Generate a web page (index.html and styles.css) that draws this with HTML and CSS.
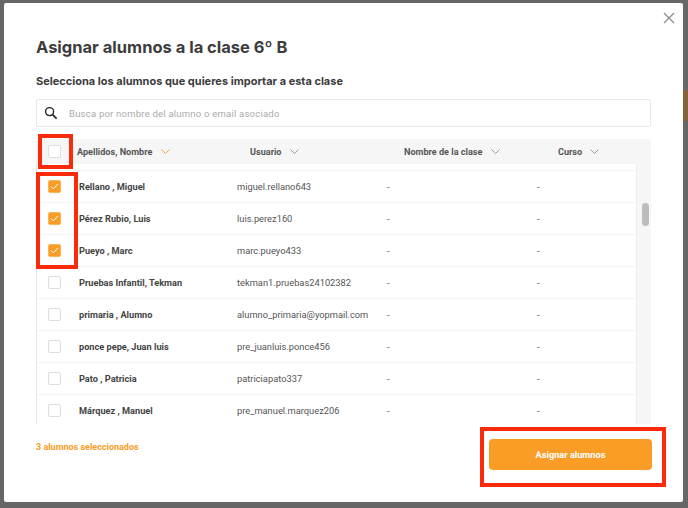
FILE: index.html
```html
<!DOCTYPE html>
<html lang="es">
<head>
<meta charset="utf-8">
<title>Asignar alumnos</title>
<link rel="stylesheet" href="styles.css">
</head>
<body>
<div class="backdrop-strip"></div>
<main class="modal">
  <button class="close" aria-label="Cerrar"><svg width="12" height="12" viewBox="0 0 12 12"><path d="M1 1l10 10M11 1L1 11" stroke="#8a8a8a" stroke-width="1.2" fill="none"/></svg></button>
  <h1>Asignar alumnos a la clase 6º B</h1>
  <h2>Selecciona los alumnos que quieres importar a esta clase</h2>
  <div class="search">
    <svg width="14" height="14" viewBox="0 0 15 15"><circle cx="6" cy="6" r="4.3" stroke="#222" stroke-width="1.5" fill="none"/><path d="M9.2 9.2l4.3 4.3" stroke="#222" stroke-width="1.8" fill="none"/></svg>
    <span>Busca por nombre del alumno o email asociado</span>
  </div>
  <div class="table">
    <div class="thead">
      <span class="box head-box"></span>
      <span class="th th-name">Apellidos, Nombre <svg class="chev" width="9" height="5" viewBox="0 0 9 5"><path d="M.5.5l4 4 4-4" stroke="#f7a033" fill="none"/></svg></span>
      <span class="th">Usuario <svg class="chev" width="9" height="5" viewBox="0 0 9 5"><path d="M.5.5l4 4 4-4" stroke="#999" fill="none"/></svg></span>
      <span class="th">Nombre de la clase <svg class="chev" width="9" height="5" viewBox="0 0 9 5"><path d="M.5.5l4 4 4-4" stroke="#999" fill="none"/></svg></span>
      <span class="th">Curso <svg class="chev" width="9" height="5" viewBox="0 0 9 5"><path d="M.5.5l4 4 4-4" stroke="#999" fill="none"/></svg></span>
    </div>
    <div class="tbody">
      <div class="rows">
        <div class="row"><span class="box on"><svg width="9" height="7" viewBox="0 0 9 7"><path d="M1 3.5l2.3 2.3L8 1" stroke="#fff" stroke-width="1" fill="none"/></svg></span><b>Rellano , Miguel</b><span>miguel.rellano643</span><span>-</span><span>-</span></div>
        <div class="row"><span class="box on"><svg width="9" height="7" viewBox="0 0 9 7"><path d="M1 3.5l2.3 2.3L8 1" stroke="#fff" stroke-width="1" fill="none"/></svg></span><b>Pérez Rubio, Luis</b><span>luis.perez160</span><span>-</span><span>-</span></div>
        <div class="row"><span class="box on"><svg width="9" height="7" viewBox="0 0 9 7"><path d="M1 3.5l2.3 2.3L8 1" stroke="#fff" stroke-width="1" fill="none"/></svg></span><b>Pueyo , Marc</b><span>marc.pueyo433</span><span>-</span><span>-</span></div>
        <div class="row"><span class="box"></span><b>Pruebas Infantil, Tekman</b><span>tekman1.pruebas24102382</span><span>-</span><span>-</span></div>
        <div class="row"><span class="box"></span><b>primaria , Alumno</b><span>alumno_primaria@yopmail.com</span><span>-</span><span>-</span></div>
        <div class="row"><span class="box"></span><b>ponce pepe, Juan luis</b><span>pre_juanluis.ponce456</span><span>-</span><span>-</span></div>
        <div class="row"><span class="box"></span><b>Pato , Patricia</b><span>patriciapato337</span><span>-</span><span>-</span></div>
        <div class="row"><span class="box"></span><b>Márquez , Manuel</b><span>pre_manuel.marquez206</span><span>-</span><span>-</span></div>
      </div>
      <div class="track"><div class="thumb"></div></div>
    </div>
  </div>
  <div class="footer">
    <span class="count">3 alumnos seleccionados</span>
    <button class="assign">Asignar alumnos</button>
  </div>
  <div class="mark mark-head"></div>
  <div class="mark mark-rows"></div>
  <div class="mark mark-btn"></div>
</main>
</body>
</html>
```
FILE: styles.css
```css
* { box-sizing: border-box; }
html, body { height: 100%; }
body {
  margin: 0;
  background: #666;
  font-family: Roboto, "Liberation Sans", sans-serif;
  color: #444;
  overflow: hidden;
  position: relative;
}
.backdrop-strip {
  position: absolute;
  right: 0;
  top: 90px;
  width: 5px;
  height: 31px;
  background: #85623a;
}
.modal {
  position: absolute;
  left: 4px;
  top: 3px;
  width: 679px;
  height: 499px;
  background: #fff;
  border-radius: 2px;
  padding: 33px 32px 0;
  display: flex;
  flex-direction: column;
}
.close {
  position: absolute;
  top: 9px;
  right: 8px;
  padding: 0;
  border: 0;
  background: none;
  display: flex;
}
h1 {
  margin: 0;
  font: 700 16.5px/22px Inter, sans-serif;
  color: #3c3c3c;
}
h2 {
  margin: 16px 0 0;
  font: 700 11px/14px Inter, sans-serif;
  color: #3c3c3c;
}
.search {
  margin-top: 11px;
  height: 28px;
  border: 1px solid #e8e8e8;
  border-radius: 2px;
  display: flex;
  align-items: center;
  padding-left: 7px;
  gap: 11px;
  font-size: 9.5px;
  letter-spacing: .22px;
  color: #aaa;
}
.table { margin-top: 12px; }
.thead {
  height: 25px;
  background: #f6f6f6;
  border-radius: 2px 2px 0 0;
  display: grid;
  grid-template-columns: 41px 173px 154px 154px 1fr;
  align-items: center;
  font-size: 9.1px;
  font-weight: 700;
  color: #555;
}
.head-box { margin-left: 12px; background: #f3f3f3; }
.th { white-space: nowrap; }
.chev { margin-left: 6px; vertical-align: 1px; }
.tbody {
  height: 260px;
  overflow: hidden;
  display: flex;
  border-left: 1px solid #e4e4e4;
}
.rows { flex: 1; padding-top: 6px; }
.row {
  height: 32px;
  border-top: 1px solid #f4f4f4;
  display: grid;
  grid-template-columns: 42px 158px 150px 150px 1fr;
  align-items: center;
  font-size: 9.3px;
  color: #555;
}
.row b { color: #444; font-weight: 700; font-size: 9.2px; }
.row .box { margin-left: 11px; }
.box {
  display: flex;
  align-items: center;
  justify-content: center;
  width: 13px;
  height: 13px;
  border: 1px solid #ddd;
  border-radius: 2px;
  background: #fff;
}
.box.on { background: #f99d27; border-color: #f9b45c; }
.track {
  width: 15px;
  background: #f6f6f6;
  border-left: 1px solid #eee;
  padding: 39px 0 0 5px;
}
.thumb { width: 7px; height: 23px; border-radius: 4px; background: #bdbdbd; }
.footer {
  display: flex;
  justify-content: space-between;
  align-items: flex-start;
  margin-top: 15px;
}
.count { font-size: 9px; font-weight: 700; line-height: 14px; padding-top: 1px; color: #f99d27; }
.assign {
  width: 163px;
  height: 31px;
  margin-right: -1px;
  border: 0;
  border-radius: 4px;
  background: #f99d27;
  color: #fff;
  font: 700 9.2px Roboto, sans-serif;
}
.mark { position: absolute; border: 4px solid #fa2a0a; }
.mark-head { left: 34px; top: 131px; width: 35px; height: 35px; }
.mark-rows { left: 32px; top: 169px; width: 42px; height: 97px; }
.mark-btn { left: 476px; top: 424px; width: 186px; height: 60px; }
```
